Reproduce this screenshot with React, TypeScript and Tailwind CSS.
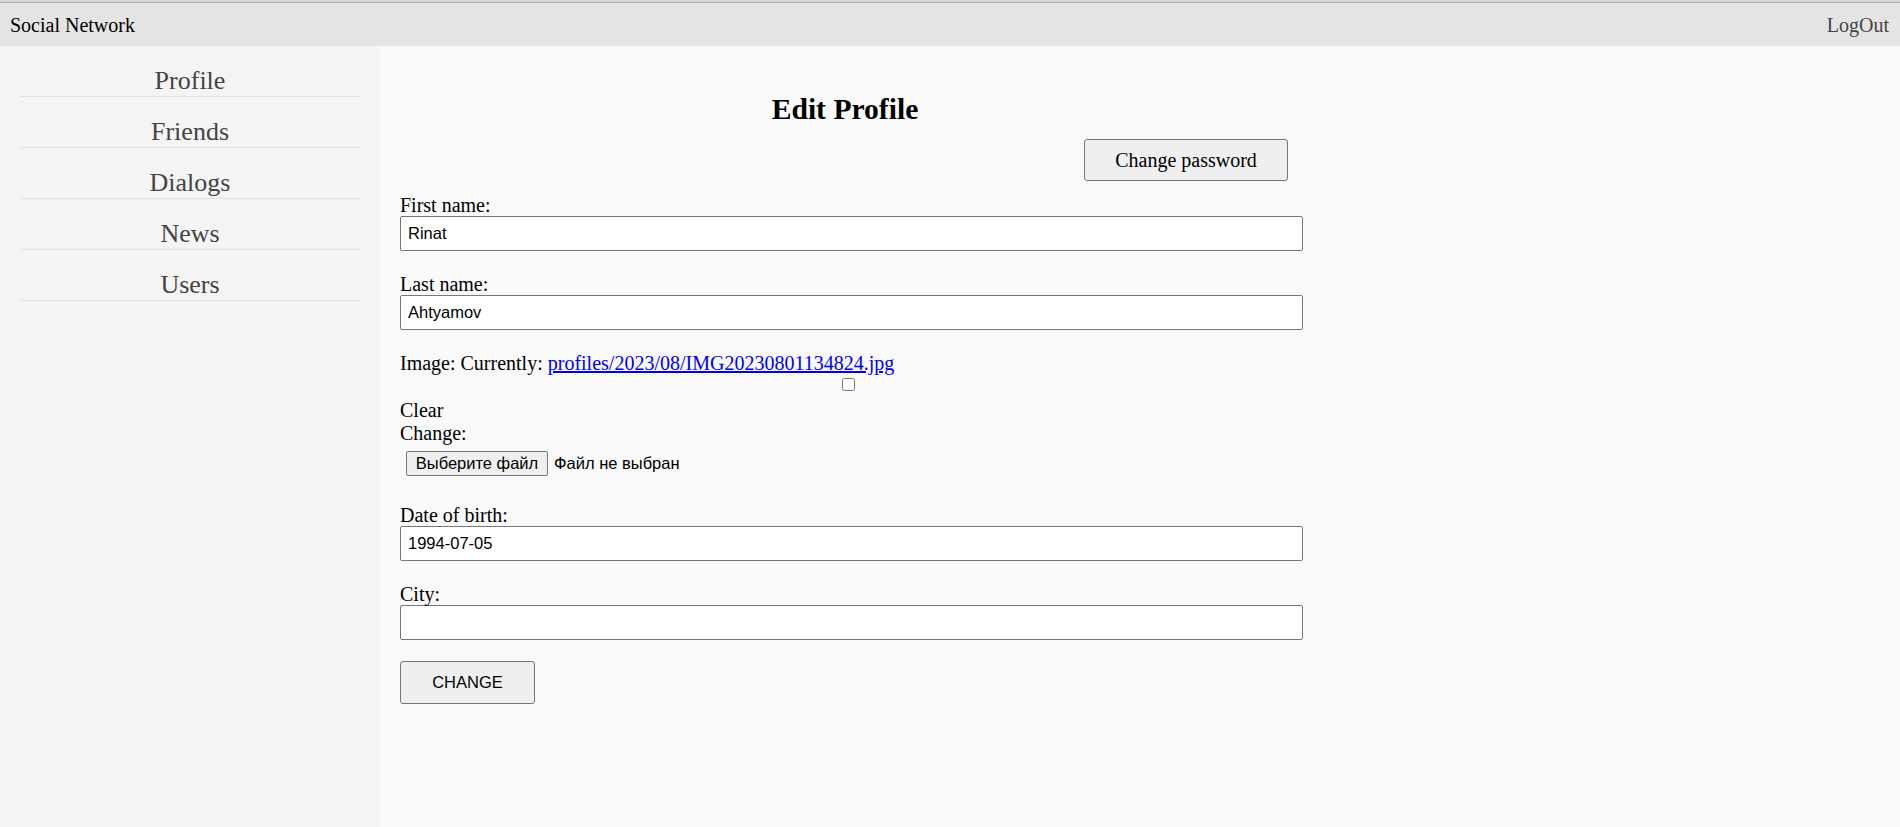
const NAV = ['Profile', 'Friends', 'Dialogs', 'News', 'Users']

const serif = "font-['Liberation_Serif','Times_New_Roman',serif]"
const sans = "font-['Liberation_Sans',Arial,sans-serif]"

function Field({ label, value, className = '' }: { label: string; value: string; className?: string }) {
  return (
    <div className={className}>
      <label className="block leading-[22px]">{label}</label>
      <input
        className={`${sans} block w-[903px] h-[35px] bg-white border border-[#767676] rounded-[2px] px-[7px] text-[16.5px] text-black outline-none`}
        defaultValue={value}
      />
    </div>
  )
}

export default function App() {
  return (
    <div className={`${serif} min-h-screen flex flex-col text-[20px] text-black`}>
      {/* top bar */}
      <div className="h-[2px] bg-[#d6d6d6]" />
      <div className="h-px bg-[#a9a9b1]" />
      <header className="h-[43px] bg-[#e4e4e4] flex items-center justify-between px-[10px]">
        <span className="leading-[22px]">Social Network</span>
        <a className="leading-[22px] text-[#444] mr-px">LogOut</a>
      </header>

      <div className="flex flex-1">
        {/* sidebar */}
        <nav className="w-[380px] bg-[#f4f4f4] px-[20px]">
          {NAV.map((n) => (
            <div
              key={n}
              className="h-[51px] pt-[20px] border-b border-[#e1e1e1] text-center text-[26px] leading-[30px] text-[#444]"
            >
              {n}
            </div>
          ))}
        </nav>

        {/* content */}
        <main className="flex-1 bg-[#f9f9f9] pl-[20px] pt-[46px] pb-[120px]">
          <h2 className="w-[890px] text-center text-[29.6px] font-bold leading-[34px]">Edit Profile</h2>
          <div className="w-[888px] flex justify-end mt-[13px]">
            <button className="w-[204px] h-[42px] bg-[#efefef] border border-[#767676] rounded-[3px] text-[20px]">
              Change password
            </button>
          </div>

          <form className="mt-[13px]">
            <Field label="First name:" value="Rinat" />
            <Field label="Last name:" value="Ahtyamov" className="mt-[22px]" />

            <div className="mt-[22px] leading-[22px]">
              Image: Currently:{' '}
              <a className="text-[#0000ee] underline">profiles/2023/08/IMG20230801134824.jpg</a>
            </div>
            <input type="checkbox" className="block m-0 ml-[442px] mt-[4px] w-[13px] h-[13px]" />
            <div className="mt-[8px] leading-[23px]">Clear</div>
            <div className="leading-[23px]">Change:</div>
            <div className={`${sans} flex items-center mt-[6px] text-[16.5px]`}>
              <button
                type="button"
                className="ml-[6px] w-[142px] h-[25px] bg-[#efefef] border border-[#767676] rounded-[2px] text-[16.5px] leading-[23px]"
              >
                Выберите файл
              </button>
              <span className="ml-[6px]">Файл не выбран</span>
            </div>

            <Field label="Date of birth:" value="1994-07-05" className="mt-[28px]" />
            <Field label="City:" value="" className="mt-[22px]" />

            <button
              type="button"
              className={`${sans} mt-[21px] w-[135px] h-[43px] bg-[#efefef] border border-[#767676] rounded-[3px] text-[16.5px]`}
            >
              CHANGE
            </button>
          </form>
        </main>
      </div>
    </div>
  )
}
